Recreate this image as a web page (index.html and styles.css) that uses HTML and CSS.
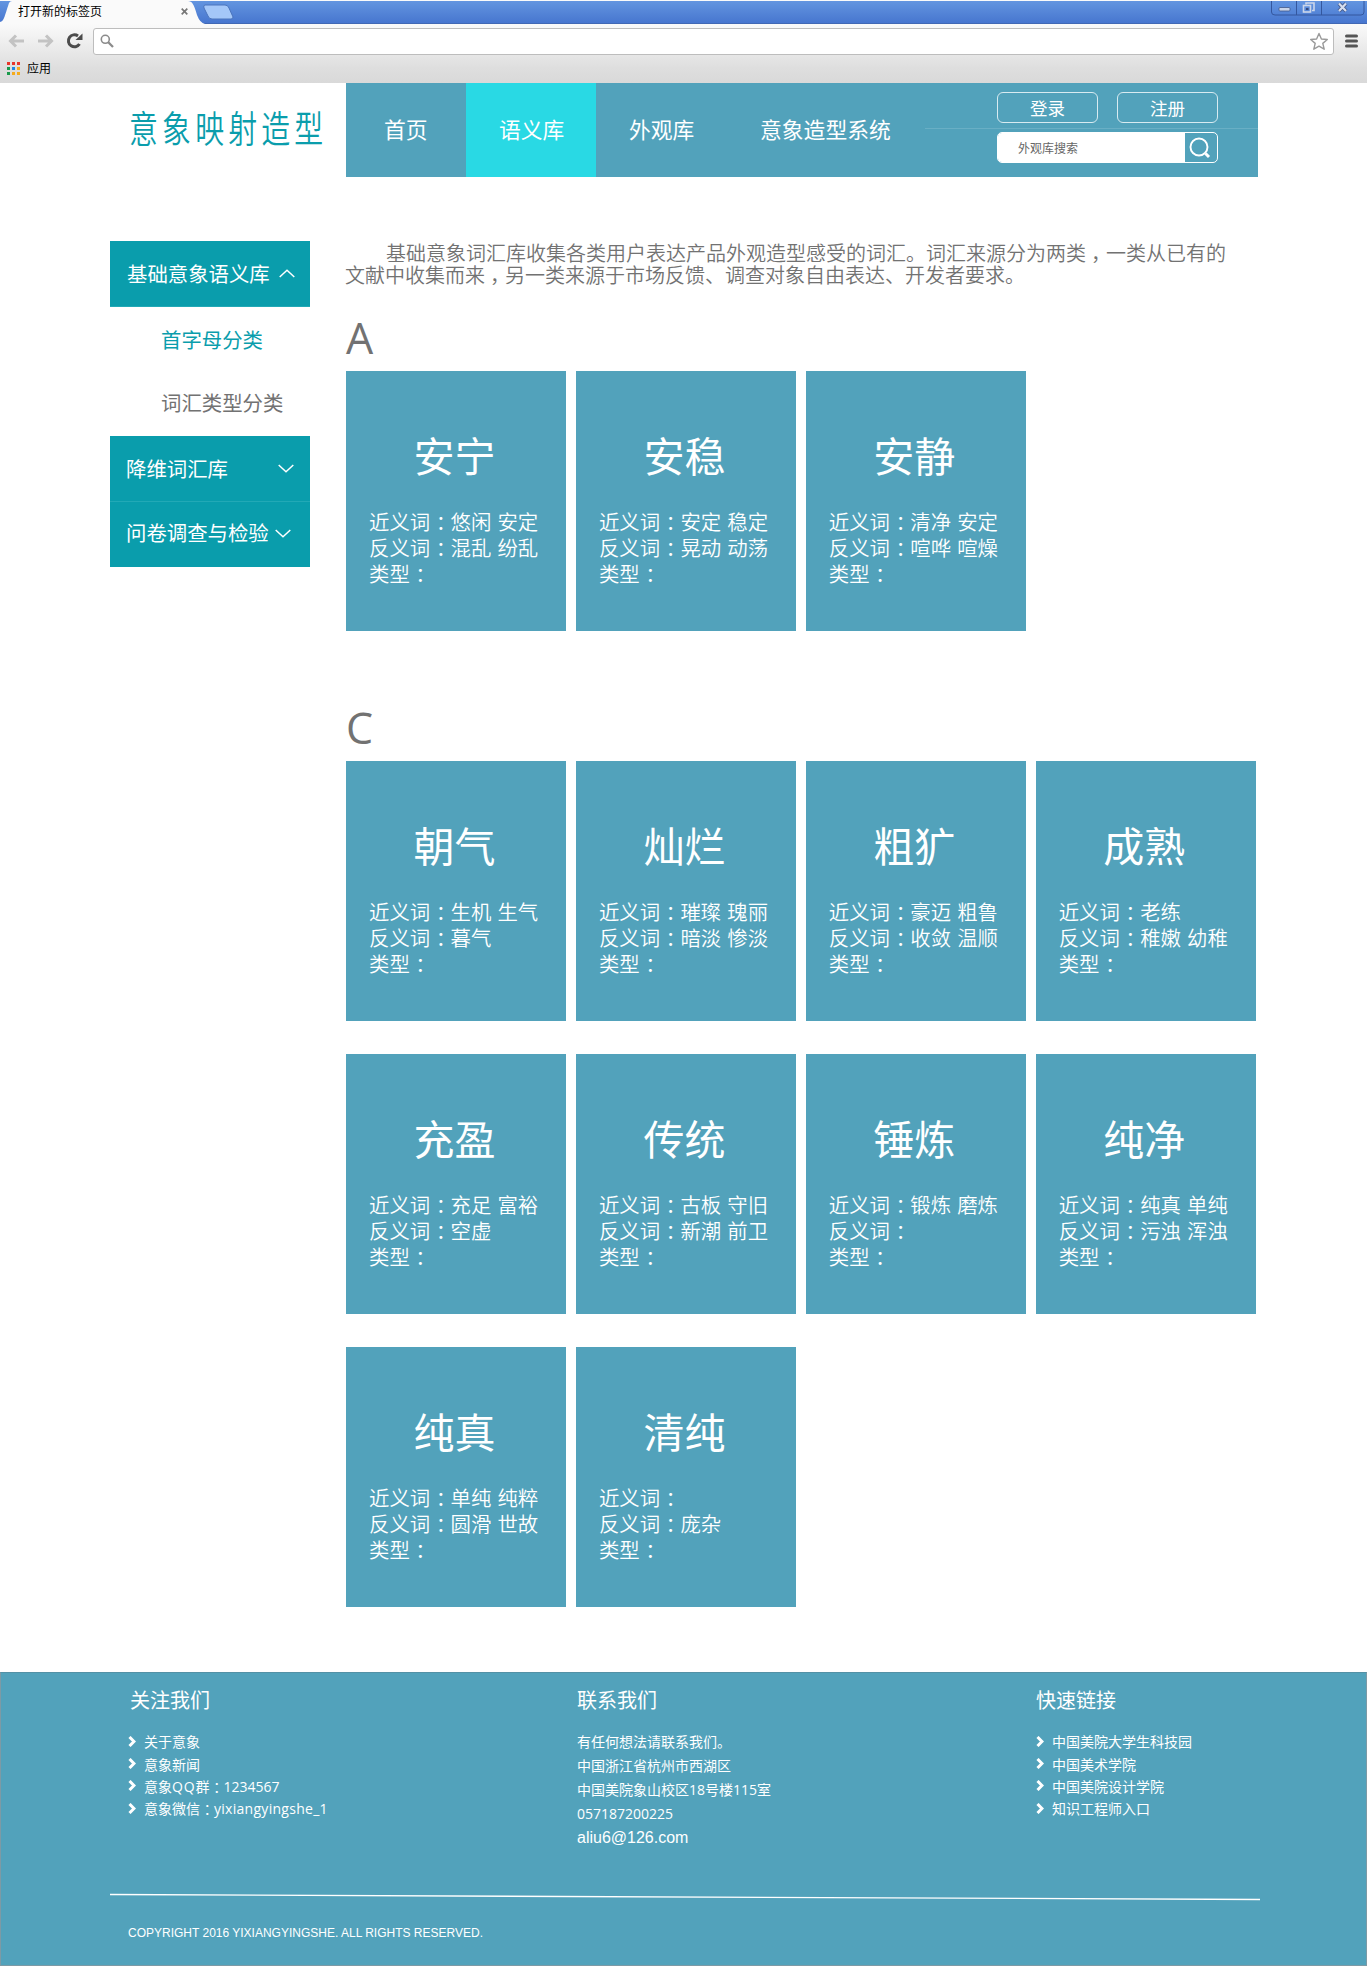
FILE: index.html
```
<!DOCTYPE html>
<html lang="zh-CN">
<head>
<meta charset="utf-8">
<title>意象映射造型</title>
<link rel="stylesheet" href="styles.css">
</head>
<body>
<div class="browser">
  <div class="tabstrip">
    <svg class="tabshape" width="240" height="23" viewBox="0 0 240 23">
      <path d="M0 23V21C4 20 4 17 9 2Q10 0 12 0H188C192 0 194 3 197 14Q200 22 205 23Z" fill="#fafafa"/>
      <path d="M205 4H225Q228 4 229 7L233 16Q233 18 231 18H212Q209 18 208 15L204 7Q203 4 205 4Z" fill="#a4c7f8" stroke="#4a74bd"/>
    </svg>
    <span class="tabtitle">打开新的标签页</span>
    <svg class="tabclose" width="7" height="7" viewBox="0 0 7 7"><path d="M.7 .7L6.3 6.3M6.3 .7L.7 6.3" stroke="#777" stroke-width="1.7"/></svg>
    <svg class="wincontrols" width="94" height="15" viewBox="0 0 94 15">
      <path d="M.5 0V11Q.5 14 4 14H90Q93 14 93 11V0M25.500 0V14M50.500 0V14" fill="none" stroke="#34579e"/>
      <rect x="8" y="6.500" width="11" height="3.500" rx="1" fill="#c9d5ea" stroke="#43598a" stroke-width=".8"/>
      <g fill="none" stroke="#cbd6ea" stroke-width="1.600"><path d="M35 3.500V2H43V9.500H41"/><rect x="32.500" y="4.500" width="7" height="6.500"/></g>
      <rect x="35" y="7" width="2.500" height="2" fill="#34497c"/>
      <path d="M68 2.500L75 10M75 2.500L68 10" stroke="#43598a" stroke-width="4"/><path d="M68 2.500L75 10M75 2.500L68 10" stroke="#d5deef" stroke-width="2.200"/>
    </svg>
  </div>
  <div class="toolbar">
    <svg class="navicons" width="84" height="30" viewBox="0 0 84 30">
      <g fill="none" stroke="#c3c3c3" stroke-width="3"><path d="M24 15H11M16 9.500L10.500 15L16 20.500"/><path d="M38 15H51M46 9.500L51.500 15L46 20.500"/></g>
      <path d="M79.500 18A6 6 0 1 1 78 10" fill="none" stroke="#4c4c4c" stroke-width="3"/><path d="M82.500 7.500V14H75.500Z" fill="#4c4c4c"/>
    </svg>
    <div class="omnibox">
      <svg width="14" height="14" viewBox="0 0 14 14"><circle cx="5.300" cy="5.300" r="4" fill="none" stroke="#8b8b8b" stroke-width="1.600"/><path d="M8.300 8.300L13 13" stroke="#8b8b8b" stroke-width="2.300"/></svg>
      <svg width="20" height="19" viewBox="0 0 20 19"><path d="M10 1.500L12.400 7L18.300 7.500L13.800 11.400L15.200 17.200L10 14.200L4.800 17.200L6.200 11.400L1.700 7.500L7.600 7Z" fill="#fff" stroke="#9a9a9a" stroke-width="1.400" stroke-linejoin="round"/></svg>
    </div>
    <svg class="menuicon" width="13" height="14" viewBox="0 0 13 14"><path d="M1.500 2H11.500M1.500 7H11.500M1.500 12H11.500" stroke="#555" stroke-width="3" stroke-linecap="round"/></svg>
  </div>
  <div class="bookmarks">
    <svg width="13" height="13" viewBox="0 0 13 13"><path fill="#e8362a" d="M0 0h3v3H0zM5 0h3v3H5zM10 0h3v3h-3z"/><path fill="#199a4b" d="M0 5h3v3H0zM0 10h3v3H0z"/><path fill="#1e87e5" d="M5 5h3v3H5z"/><path fill="#f5ab1d" d="M10 5h3v3h-3zM5 10h3v3H5zM10 10h3v3h-3z"/></svg>
    <span>应用</span>
  </div>
</div>

<header class="header">
  <h1 class="logo"><span>意象映射造型</span></h1>
  <div class="navbar">
    <nav class="nav">
      <a class="home">首页</a>
      <a class="active">语义库</a>
      <a class="looks">外观库</a>
      <a class="system">意象造型系统</a>
    </nav>
    <div class="tools">
      <div class="buttons"><a class="btn">登录</a><a class="btn">注册</a></div>
      <div class="search">
        <span class="field">外观库搜索</span>
        <svg width="32" height="29" viewBox="0 0 32 29"><circle cx="14" cy="14" r="8.500" fill="none" stroke="#fff" stroke-width="1.900"/><path d="M20.500 20.500L24 24" stroke="#fff" stroke-width="3"/></svg>
      </div>
    </div>
  </div>
</header>

<main class="main">
  <aside class="sidebar">
    <a class="group first">基础意象语义库<svg width="16" height="9" viewBox="0 0 16 9"><path d="M.7 8L8 1.200L15.300 8"/></svg></a>
    <a class="sub current">首字母分类</a>
    <a class="sub">词汇类型分类</a>
    <a class="group second">降维词汇库<svg width="16" height="9" viewBox="0 0 16 9"><path d="M.7 1L8 7.800L15.300 1"/></svg></a>
    <a class="group third">问卷调查与检验<svg width="16" height="9" viewBox="0 0 16 9"><path d="M.7 1L8 7.800L15.300 1"/></svg></a>
  </aside>
  <div class="content">
    <div class="intro">
      <p class="indent">基础意象词汇库收集各类用户表达产品外观造型感受的词汇。词汇来源分为两类<em>，</em>一类从已有的</p>
      <p>文献中收集而来<em>，</em>另一类来源于市场反馈、调查对象自由表达、开发者要求。</p>
    </div>
    <section>
      <h2>A</h2>
      <div class="cards">
        <article class="card"><h3>安宁</h3><p>近义词<i>：</i>悠闲 安定</p><p>反义词<i>：</i>混乱 纷乱</p><p>类型<i>：</i></p></article>
        <article class="card"><h3>安稳</h3><p>近义词<i>：</i>安定 稳定</p><p>反义词<i>：</i>晃动 动荡</p><p>类型<i>：</i></p></article>
        <article class="card"><h3>安静</h3><p>近义词<i>：</i>清净 安定</p><p>反义词<i>：</i>喧哗 喧燥</p><p>类型<i>：</i></p></article>
      </div>
    </section>
    <section class="next">
      <h2>C</h2>
      <div class="cards">
        <article class="card"><h3>朝气</h3><p>近义词<i>：</i>生机 生气</p><p>反义词<i>：</i>暮气</p><p>类型<i>：</i></p></article>
        <article class="card"><h3>灿烂</h3><p>近义词<i>：</i>璀璨 瑰丽</p><p>反义词<i>：</i>暗淡 惨淡</p><p>类型<i>：</i></p></article>
        <article class="card"><h3>粗犷</h3><p>近义词<i>：</i>豪迈 粗鲁</p><p>反义词<i>：</i>收敛 温顺</p><p>类型<i>：</i></p></article>
        <article class="card"><h3>成熟</h3><p>近义词<i>：</i>老练</p><p>反义词<i>：</i>稚嫩 幼稚</p><p>类型<i>：</i></p></article>
        <article class="card"><h3>充盈</h3><p>近义词<i>：</i>充足 富裕</p><p>反义词<i>：</i>空虚</p><p>类型<i>：</i></p></article>
        <article class="card"><h3>传统</h3><p>近义词<i>：</i>古板 守旧</p><p>反义词<i>：</i>新潮 前卫</p><p>类型<i>：</i></p></article>
        <article class="card"><h3>锤炼</h3><p>近义词<i>：</i>锻炼 磨炼</p><p>反义词<i>：</i></p><p>类型<i>：</i></p></article>
        <article class="card"><h3>纯净</h3><p>近义词<i>：</i>纯真 单纯</p><p>反义词<i>：</i>污浊 浑浊</p><p>类型<i>：</i></p></article>
        <article class="card"><h3>纯真</h3><p>近义词<i>：</i>单纯 纯粹</p><p>反义词<i>：</i>圆滑 世故</p><p>类型<i>：</i></p></article>
        <article class="card"><h3>清纯</h3><p>近义词<i>：</i></p><p>反义词<i>：</i>庞杂</p><p>类型<i>：</i></p></article>
      </div>
    </section>
  </div>
</main>

<footer class="footer">
  <div class="columns">
    <div class="col">
      <h4 class="inset">关注我们</h4>
      <ul class="links">
        <li><svg width="8" height="11" viewBox="0 0 8 11"><path d="M1.500 1L6 5.500L1.500 10"/></svg>关于意象</li>
        <li><svg width="8" height="11" viewBox="0 0 8 11"><path d="M1.500 1L6 5.500L1.500 10"/></svg>意象新闻</li>
        <li><svg width="8" height="11" viewBox="0 0 8 11"><path d="M1.500 1L6 5.500L1.500 10"/></svg><span>意象<span class="qq">QQ</span>群<i>：</i>1234567</span></li>
        <li><svg width="8" height="11" viewBox="0 0 8 11"><path d="M1.500 1L6 5.500L1.500 10"/></svg><span>意象微信<i>：</i><span class="account">yixiangyingshe_1</span></span></li>
      </ul>
    </div>
    <div class="col">
      <h4>联系我们</h4>
      <ul class="contact">
        <li>有任何想法请联系我们。</li>
        <li>中国浙江省杭州市西湖区</li>
        <li>中国美院象山校区18号楼115室</li>
        <li>057187200225</li>
        <li class="mail">aliu6@126.com</li>
      </ul>
    </div>
    <div class="col">
      <h4>快速链接</h4>
      <ul class="links">
        <li><svg width="8" height="11" viewBox="0 0 8 11"><path d="M1.500 1L6 5.500L1.500 10"/></svg>中国美院大学生科技园</li>
        <li><svg width="8" height="11" viewBox="0 0 8 11"><path d="M1.500 1L6 5.500L1.500 10"/></svg>中国美术学院</li>
        <li><svg width="8" height="11" viewBox="0 0 8 11"><path d="M1.500 1L6 5.500L1.500 10"/></svg>中国美院设计学院</li>
        <li><svg width="8" height="11" viewBox="0 0 8 11"><path d="M1.500 1L6 5.500L1.500 10"/></svg>知识工程师入口</li>
      </ul>
    </div>
  </div>
  <svg class="rule" width="1150" height="8" viewBox="0 0 1150 8"><path d="M0 1.500L1150 6.500" stroke="#fff" stroke-width="1.300"/></svg>
  <p class="copyright">COPYRIGHT 2016 YIXIANGYINGSHE. ALL RIGHTS RESERVED.</p>
</footer>
</body>
</html>
```
FILE: styles.css
```
* { box-sizing: border-box; margin: 0; padding: 0; }
body {
  width: 1367px;
  background: #fff;
  color: #727272;
  font-family: "Open Sans", "Noto Sans CJK SC", sans-serif;
}
ul { list-style: none; }
svg { display: block; flex: none; }
/* full-width punctuation centred in its cell */
i, em { display: inline-block; font-style: normal; line-height: 0; }
i { transform: translateX(.27em); }
em { transform: translateX(.25em); }

/* browser frame */
.browser {
  height: 83px;
  padding-top: 1px;
  color: #000;
  font: 12px "Noto Sans CJK SC", sans-serif;
  background: linear-gradient(#fafafa 24px, #dedede 68px, #d9d9d9);
}
.tabstrip {
  position: relative;
  display: flex;
  height: 23px;
  background: linear-gradient(#6395e0, #4776cf);
  border-bottom: 1px solid #4168b4;
}
.tabshape { position: absolute; left: 0; top: 0; }
.tabtitle { position: relative; width: 162px; padding-left: 18px; line-height: 20px; }
.tabclose { position: relative; margin-top: 7px; margin-left: 19px; }
.wincontrols { margin-left: auto; margin-right: 2px; }
.toolbar { display: flex; align-items: center; height: 34px; }
.navicons { margin: 0 9px 0 0; }
.omnibox {
  display: flex;
  align-items: center;
  justify-content: space-between;
  width: 1241px;
  height: 27px;
  padding: 0 4px 0 6px;
  background: #fff;
  border: 1px solid #bdbdbd;
  border-radius: 3px;
}
.menuicon { margin-left: 11px; }
.bookmarks { display: flex; align-items: center; gap: 7px; height: 21px; padding-left: 7px; }
.bookmarks span { line-height: 20px; padding-bottom: 1px; }

/* site header */
.header { display: flex; height: 94px; padding-left: 129px; }
.logo { width: 217px; color: #0a9dac; font-size: 37px; font-weight: 350; line-height: 92px; white-space: nowrap; }
.logo span { display: inline-block; transform: scaleX(.78); transform-origin: 0 0; letter-spacing: 5.400px; }
.navbar { display: flex; width: 912px; background: #52a2bb; }
.nav { display: flex; flex: none; width: 579px; color: #fff; font-size: 21.800px; line-height: 94px; white-space: nowrap; }
.nav a { flex: none; }
.home { width: 120px; padding-left: 38px; }
.active { width: 130px; padding-left: 33px; background: #29d9e4; }
.looks { width: 130px; padding-left: 33px; }
.system { width: 199px; padding-left: 34px; }
.tools { width: 333px; padding: 9px 0 0 72px; background: linear-gradient(#69afc5, #69afc5) 0 45px / 100% 1px no-repeat; }
.buttons { display: flex; gap: 19px; }
.btn {
  width: 101px;
  height: 31px;
  border: 1px solid #d8ebf1;
  border-radius: 6px;
  color: #fff;
  font-size: 17.500px;
  line-height: 30px;
  text-align: center;
}
.search { display: flex; width: 221px; height: 31px; margin-top: 9px; border: 1px solid #fff; border-radius: 5px; overflow: hidden; }
.field { width: 188px; padding-left: 20px; background: #fff; color: #666; font-size: 12px; line-height: 31px; }

/* body */
.main { display: flex; padding: 64px 0 0 110px; height: 1495px; }
.sidebar { width: 200px; font-size: 20.400px; line-height: 64px; white-space: nowrap; }
.sidebar a { display: flex; align-items: center; }
.group { height: 66px; background: #0a9dac; color: #fff; border-bottom: 1px solid #22a9b6; }
.group path { fill: none; stroke: #fff; stroke-width: 1.500; }
.first { padding-left: 17px; }
.first svg { margin-left: 9px; }
.second { padding-left: 16px; }
.second svg { margin-left: 50px; }
.group.third { padding-left: 16px; height: 65px; line-height: 62px; border: 0; padding-bottom: 3px; }
.third svg { margin-left: 6px; }
.sub { height: 63px; padding: 0 0 4px 51px; }
.sub.current { height: 66px; padding-bottom: 0; color: #0a9dac; }

.content { width: 920px; margin-left: 36px; }
.intro { height: 46px; margin-left: -1px; padding-top: 2px; font-size: 20px; line-height: 21.500px; font-weight: 350; white-space: nowrap; }
.intro p { height: 21.500px; }
.intro .indent { padding-left: 41px; }
h2 { height: 84px; padding-top: 21px; font-size: 43px; font-weight: 400; line-height: 60px; }
.cards { display: grid; grid-template-columns: repeat(4, 220px); gap: 33px 9.900px; }
.card { height: 260px; padding: 60px 0 0 23px; background: #52a2bb; color: #fff; font-size: 20.400px; line-height: 26px; white-space: nowrap; word-spacing: .8px; font-weight: 350; }
.card h3 { height: 78px; margin-left: -26px; text-align: center; font-size: 41px; font-weight: 400; line-height: 50px; }
.card p { height: 26px; }
.next { padding-top: 46px; }

/* footer */
.footer { height: 294px; background: #52a2bb; border: 1px solid #7d9aa5; border-top-color: #5391a6; color: #fff; padding-top: 15px; }
.columns { display: flex; height: 205px; padding-left: 127px; }
.col:nth-child(1) { width: 449px; }
.col:nth-child(2) { width: 459px; }
h4 { font-size: 20px; font-weight: 400; line-height: 26px; height: 42px; }
.inset { padding-left: 2px; }
.links li { display: flex; align-items: center; height: 22.400px; font-size: 14px; }
.links svg { margin-right: 8px; }
.links path { fill: none; stroke: #fff; stroke-width: 3; }
.qq { letter-spacing: .8px; }
.account { letter-spacing: .28px; }
.contact { font-size: 14px; line-height: 24px; }
.mail { font-family: "Liberation Sans", sans-serif; font-size: 16px; }
.rule { margin-left: 109px; }
.copyright { margin: 22px 0 0 127px; font: 12px/20px "Liberation Sans", sans-serif; }
```
